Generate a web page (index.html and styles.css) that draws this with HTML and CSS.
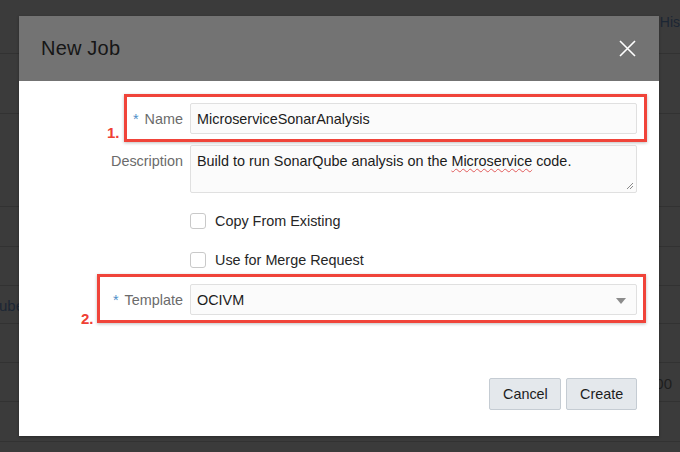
FILE: index.html
```html
<!DOCTYPE html>
<html>
<head>
<meta charset="utf-8">
<link rel="stylesheet" href="styles.css">
</head>
<body>
<div class="page">
  <div class="bg-row h54"><span class="bg-text his">His</span></div>
  <div class="bg-row h60"></div>
  <div class="bg-row h93"></div>
  <div class="bg-row h40"></div>
  <div class="bg-row h39"></div>
  <div class="bg-row h38"><span class="bg-text ube">ube</span></div>
  <div class="bg-row h39"></div>
  <div class="bg-row h39"><span class="bg-text zz">00</span></div>
  <div class="bg-row h40"></div>
  <div class="bg-row rest"></div>
</div>

<div class="dialog">
  <div class="dialog-header">
    <h1 class="dialog-title">New Job</h1>
    <button class="close-btn" aria-label="Close">
      <svg width="17" height="17" viewBox="0 0 17 17"><path d="M1 1 L16 16 M16 1 L1 16" stroke="#ffffff" stroke-width="1.6" fill="none"/></svg>
    </button>
  </div>
  <div class="dialog-body">
    <div class="form-row row-name">
      <label class="field-label"><span class="req">*</span>Name</label>
      <div class="input">MicroserviceSonarAnalysis</div>
      <div class="callout callout-name"></div>
      <span class="callout-num num-1">1.</span>
    </div>
    <div class="form-row row-desc">
      <label class="field-label">Description</label>
      <div class="input textarea">Build to run SonarQube analysis on the <span class="spell">Microservice</span> code.
        <svg class="grip" width="8" height="8" viewBox="0 0 8 8"><path d="M7 1 L1 7 M7 4 L4 7" stroke="#8a8a8a" stroke-width="1" fill="none"/></svg>
      </div>
    </div>
    <div class="form-row row-check1">
      <span></span>
      <label class="check"><span class="box"></span>Copy From Existing</label>
    </div>
    <div class="form-row row-check2">
      <span></span>
      <label class="check"><span class="box"></span>Use for Merge Request</label>
    </div>
    <div class="form-row row-template">
      <label class="field-label"><span class="req">*</span>Template</label>
      <div class="input select">OCIVM<span class="arrow"></span></div>
      <div class="callout callout-template"></div>
      <span class="callout-num num-2">2.</span>
    </div>
    <div class="footer">
      <button class="btn">Cancel</button>
      <button class="btn">Create</button>
    </div>
  </div>
</div>
</body>
</html>
```

FILE: styles.css
```css
* { box-sizing: border-box; }
html, body {
  margin: 0;
  padding: 0;
  width: 680px;
  height: 452px;
  overflow: hidden;
  font-family: "Liberation Sans", Arial, sans-serif;
}
body {
  background: #3b3b3b;
  position: relative;
}
.page {
  display: flex;
  flex-direction: column;
  height: 452px;
}
.bg-row {
  border-bottom: 1px solid #323232;
  display: flex;
  align-items: center;
  justify-content: space-between;
  flex-shrink: 0;
}
.h54 { height: 54px; align-items: flex-start; }
.h60 { height: 60px; }
.h93 { height: 93px; }
.h40 { height: 40px; }
.h39 { height: 39px; }
.h38 { height: 38px; }
.rest { flex: 1; border-bottom: none; }
.bg-text {
  font-size: 15px;
  color: #1b2634;
}
.his { margin-left: auto; margin-right: 0; margin-top: 14px; font-size: 14px; }
.ube { margin-left: -1px; margin-top: 2px; }
.zz { margin-left: auto; margin-right: 8px; color: #1e1e1e; margin-top: 2px; }

.dialog {
  position: absolute;
  left: 19px;
  top: 16px;
  width: 640px;
  height: 420px;
  background: #ffffff;
  display: flex;
  flex-direction: column;
  box-shadow: 0 1px 3px rgba(0,0,0,0.3);
}
.dialog-header {
  height: 65px;
  background: #737373;
  display: flex;
  align-items: center;
  justify-content: space-between;
  padding: 0 23px 0 22px;
  flex-shrink: 0;
}
.dialog-title {
  margin: 0;
  font-size: 20px;
  font-weight: normal;
  color: #161616;
  letter-spacing: 0.2px;
}
.close-btn {
  background: none;
  border: none;
  padding: 0;
  width: 17px;
  height: 17px;
  display: flex;
}
.dialog-body {
  flex: 1;
  display: flex;
  flex-direction: column;
  padding: 22px 22px 26px 0;
}
.form-row {
  display: grid;
  grid-template-columns: 164px 447px;
  column-gap: 7px;
  align-items: center;
  position: relative;
}
.field-label {
  text-align: right;
  font-size: 14.4px;
  color: #6b6b6b;
}
.row-desc .field-label { align-self: start; padding-top: 8px; }
.req {
  color: #4e8fc7;
  margin-right: 6px;
}
.input {
  height: 31px;
  background: #fbfbfb;
  border: 1px solid #e0e0e0;
  border-radius: 2px;
  font-size: 14.4px;
  color: #1c1c1c;
  padding: 0 6px;
  display: flex;
  align-items: center;
  position: relative;
}
.textarea {
  height: 48px;
  display: block;
  padding-top: 7px;
  line-height: 17px;
}
.spell {
  text-decoration: underline wavy #e25b5b;
  text-decoration-thickness: 1px;
  text-underline-offset: 2px;
}
.grip {
  position: absolute;
  right: 2px;
  bottom: 2px;
}
.row-desc { margin-top: 11px; }
.row-check1 { margin-top: 20px; }
.row-check2 { margin-top: 23px; }
.row-template { margin-top: 16px; }
.check {
  display: flex;
  align-items: center;
  font-size: 14.4px;
  color: #262626;
  height: 16px;
}
.box {
  width: 16px;
  height: 16px;
  border: 1px solid #c9c9c9;
  border-radius: 3px;
  background: #fff;
  margin-right: 9px;
}
.arrow {
  position: absolute;
  right: 10px;
  top: 13px;
  width: 0;
  height: 0;
  border-left: 5px solid transparent;
  border-right: 5px solid transparent;
  border-top: 6px solid #8c8c8c;
}
.callout {
  position: absolute;
  border: 3px solid #f0443a;
  box-shadow: 0 1px 3px rgba(0,0,0,0.25);
  pointer-events: none;
}
.callout-name {
  left: 105px;
  right: -10px;
  top: -9px;
  bottom: -8px;
}
.callout-template {
  left: 78px;
  right: -9px;
  top: -10px;
  bottom: -8px;
}
.callout-num {
  position: absolute;
  font-size: 15px;
  font-weight: bold;
  color: #ef4034;
}
.num-1 { left: 88px; top: 21px; }
.num-2 { left: 62px; top: 26px; }
.footer {
  margin-top: auto;
  display: flex;
  justify-content: flex-end;
  gap: 5px;
}
.btn {
  height: 32px;
  background: #e4e8ec;
  border: 1px solid #c5ccd3;
  border-radius: 2px;
  font-family: "Liberation Sans", Arial, sans-serif;
  font-size: 14.4px;
  color: #1c1c1c;
  padding: 0 13px;
}
.btn:first-child { width: 72px; }
.btn:last-child { width: 71px; }
```
